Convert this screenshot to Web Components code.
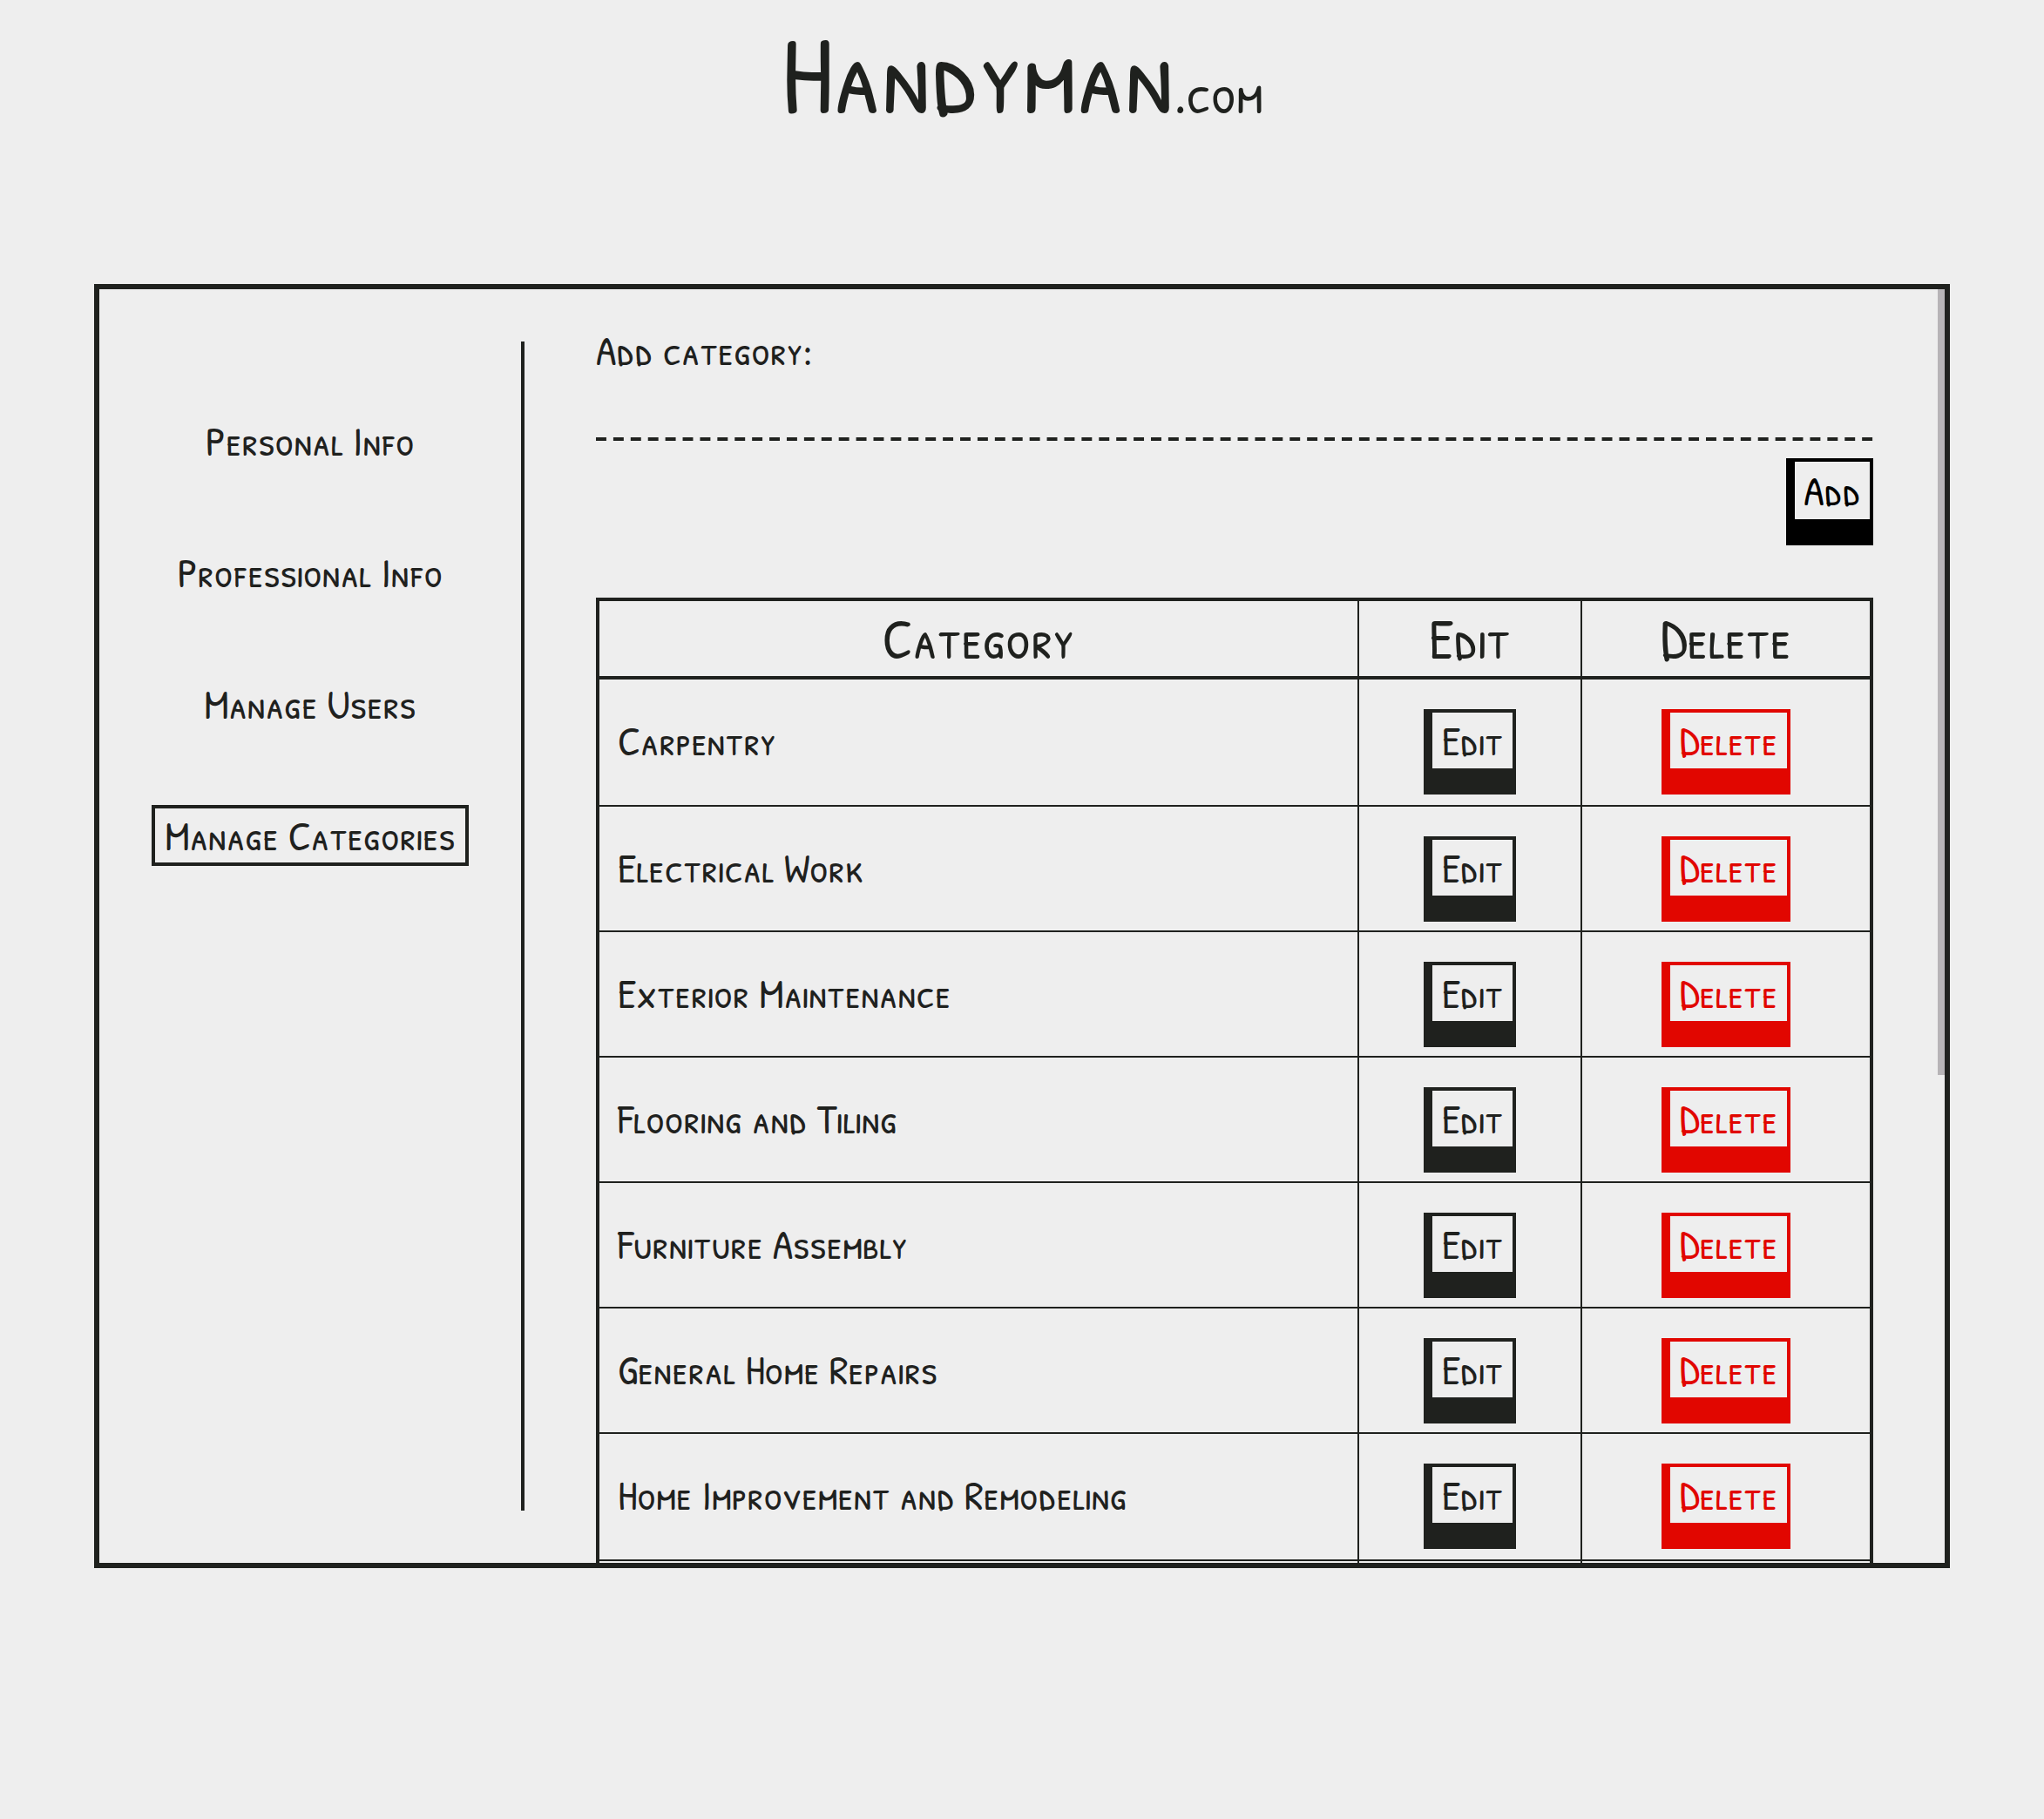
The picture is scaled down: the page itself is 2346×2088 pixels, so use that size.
<!DOCTYPE html>
<html lang="en">
<head>
<meta charset="utf-8">
<meta name="viewport" content="width=device-width, initial-scale=1">
<title>Handyman.com</title>
<style>
  body {
    margin: 0;
    min-height: 100vh;
    --ink: #1f211e;
    --paper: #eee;
    --danger: #e10600;
    background: var(--paper);
    color: var(--ink);
    font: 48px "Patrick Hand SC", "Patrick Hand", "Open Sans", sans-serif;
  }
</style>
</head>
<body>
<hm-header></hm-header>
<hm-panel>
  <hm-nav slot="nav"></hm-nav>
  <hm-add-form></hm-add-form>
  <hm-table></hm-table>
</hm-panel>

<script>
const define = (name, html, setup) => customElements.define(name, class extends HTMLElement {
  constructor() {
    super();
    this.attachShadow({ mode: "open" }).innerHTML = html;
  }
  connectedCallback() { if (setup) setup(this, this.shadowRoot); }
});

define("hm-header", `
  <style>
    :host { display: block; padding: 20px 0 178px; text-align: center; }
    h1 { margin: 0; font-size: 128px; line-height: 128px; font-weight: 400; }
    span { font-size: 64px; line-height: 64px; }
  </style>
  <h1>Handyman<span>.com</span></h1>
`);

define("hm-panel", `
  <style>
    :host {
      display: flex;
      height: 70vh;
      margin: 0 108px;
      border: 6px solid var(--ink);
      overflow: hidden;
    }
    aside { flex: 0 0 488px; box-sizing: border-box; padding: 60px 0 60px 60px; }
    main { flex: 1; min-width: 0; padding: 38px 74px 0 82px; overflow-y: auto; scrollbar-width: none; }
    .thumb { flex: 0 0 8px; height: 902px; background: #b7b4b7; }
  </style>
  <aside><slot name="nav"></slot></aside>
  <main><slot></slot></main>
  <div class="thumb"></div>
`);

define("hm-nav", `
  <style>
    :host { display: block; height: 100%; box-sizing: border-box; border-right: 4px solid var(--ink); }
    nav { display: flex; flex-direction: column; align-items: center; gap: 81px; padding: 79px 60px 0 0; }
    a {
      padding: 0 11px;
      border: 4px solid transparent;
      line-height: 62px;
      color: inherit;
      text-decoration: none;
      white-space: nowrap;
    }
    a[aria-current] { border-color: var(--ink); }
  </style>
  <nav>
    <a href="#personal">Personal Info</a>
    <a href="#professional">Professional Info</a>
    <a href="#users">Manage Users</a>
    <a href="#categories" aria-current="page">Manage Categories</a>
  </nav>
`);

define("hm-button", `
  <style>
    :host { display: inline-block; vertical-align: top; --tone: var(--ink); }
    :host([tone="black"]) { --tone: #000; --height: 66px; --side: 10px; }
    :host([tone="danger"]) { --tone: var(--danger); }
    button {
      display: block;
      margin: 0;
      padding: 0 var(--side, 11px);
      border: solid var(--tone);
      border-width: 4px 4px 30px 10px;
      background: transparent;
      color: var(--tone);
      font: inherit;
      line-height: var(--height, 64px);
      cursor: pointer;
    }
  </style>
  <button type="button"><slot></slot></button>
`);

define("hm-add-form", `
  <style>
    :host { display: block; margin-bottom: 60px; }
    form { display: flex; flex-direction: column; }
    label { line-height: 64px; }
    input {
      height: 68px;
      padding: 0;
      border: 0;
      outline: 0;
      background: transparent;
      color: inherit;
      font: inherit;
    }
    .line { height: 4px; overflow: hidden; }
    .line::before {
      content: "";
      display: block;
      width: calc(100% + 8px);
      height: 4px;
      background: linear-gradient(90deg, var(--ink) 60%, transparent 60%) 0 0 / 20px 4px round;
    }
    hm-button { align-self: flex-end; margin-top: 20px; }
  </style>
  <form>
    <label for="category">Add category:</label>
    <input id="category" type="text">
    <div class="line"></div>
    <hm-button tone="black">Add</hm-button>
  </form>
`);

const categories = [
  "Carpentry",
  "Electrical Work",
  "Exterior Maintenance",
  "Flooring and Tiling",
  "Furniture Assembly",
  "General Home Repairs",
  "Home Improvement and Remodeling",
  ""
];

define("hm-table", `
  <style>
    :host { display: block; }
    table {
      width: 100%;
      table-layout: fixed;
      border: 4px solid var(--ink);
      border-spacing: 0;
    }
    .edit { width: 256px; }
    .delete { width: 330px; }
    th {
      padding: 0;
      border-bottom: 4px solid var(--ink);
      font-size: 64px;
      line-height: 86px;
      font-weight: 400;
    }
    td {
      height: 98px;
      padding: 34px 0 10px;
      border-bottom: 2px solid var(--ink);
      text-align: center;
      vertical-align: top;
      line-height: 64px;
    }
    tr:nth-child(6n + 1) td { padding-bottom: 12px; }
    th:not(:last-child), td:not(:last-child) { border-right: 2px solid var(--ink); }
    td:first-child { padding-left: 21px; text-align: left; }
    td span { display: block; padding-top: 4px; }
  </style>
  <table>
    <colgroup><col><col class="edit"><col class="delete"></colgroup>
    <thead><tr><th scope="col">Category</th><th scope="col">Edit</th><th scope="col">Delete</th></tr></thead>
    <tbody></tbody>
  </table>
`, (host, root) => {
  root.querySelector("tbody").innerHTML = categories.map(name => name
    ? `<tr><td><span>${name}</span></td><td><hm-button>Edit</hm-button></td><td><hm-button tone="danger">Delete</hm-button></td></tr>`
    : `<tr><td></td><td></td><td></td></tr>`).join("");
});
</script>
</body>
</html>
